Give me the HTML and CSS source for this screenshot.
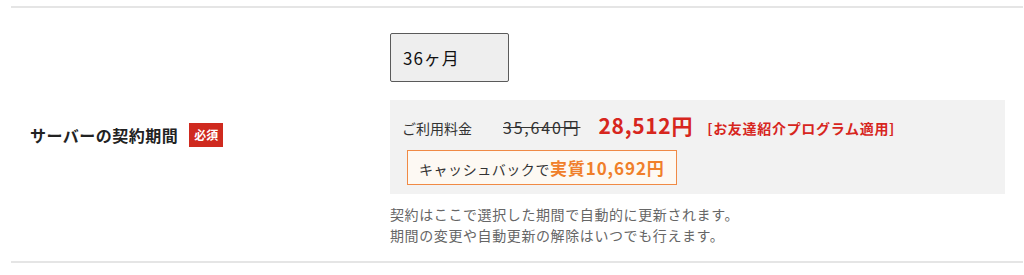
FILE: index.html
```html
<!DOCTYPE html>
<html lang="ja">
<head>
  <meta charset="UTF-8" />
  <meta name="viewport" content="width=device-width, initial-scale=1.0"/>
  <title>サーバーの契約期間</title>
  <link rel="stylesheet" href="styles.css">
</head>
<body>
  <div class="form-table">
    <div class="form-row">
      <div class="form-label">
        <span class="label-text">サーバーの契約期間</span>
        <span class="required">必須</span>
      </div>
      <div class="form-field">
        <div class="select-box">36ヶ月</div>
        <div class="price-box">
          <div class="price-line">
            <span class="price-title">ご利用料金</span>
            <span class="price-old">35,640円</span>
            <span class="price-new">28,512円</span>
            <span class="price-note">[お友達紹介プログラム適用]</span>
          </div>
          <div class="cashback">キャッシュバックで<span class="cashback-amount">実質10,692円</span></div>
        </div>
        <p class="notes">契約はここで選択した期間で自動的に更新されます。<br>期間の変更や自動更新の解除はいつでも行えます。</p>
      </div>
    </div>
  </div>
</body>
</html>
```

FILE: styles.css
```css
body {
  margin: 0;
  background: #ffffff;
  font-family: "Noto Sans CJK JP", "Noto Sans", sans-serif;
  color: #333;
}
.form-table {
  margin: 6px 1px 0 11px;
}
.form-row {
  display: flex;
  align-items: center;
  border-top: 2px solid #e5e5e5;
  border-bottom: 2px solid #e5e5e5;
}
.form-label {
  width: 360px;
  padding-left: 19px;
  display: flex;
  align-items: center;
  gap: 11px;
}
.label-text {
  font-size: 16px;
  font-weight: bold;
  letter-spacing: 0.5px;
  color: #222;
}
.required {
  background: #cf2a1f;
  color: #fff;
  font-size: 12px;
  font-weight: bold;
  padding: 0 5px;
  line-height: 24px;
}
.form-field {
  flex: 1;
  padding: 25px 18px 15px 0;
}
.select-box {
  width: 105px;
  height: 47px;
  line-height: 47px;
  padding-left: 12px;
  background: #eeeeee;
  border: 1px solid #5a5a5a;
  border-radius: 2px;
  font-size: 17px;
  letter-spacing: 1px;
  color: #111;
}
.price-box {
  margin-top: 18px;
  background: #f2f2f2;
  padding: 11px 12px 9px 12px;
}
.price-line {
  display: flex;
  align-items: baseline;
  height: 30px;
  line-height: 28px;
}
.price-title {
  font-size: 14px;
  width: 101px;
}
.price-old {
  font-size: 16px;
  letter-spacing: 1.8px;
  text-decoration: line-through;
  color: #333;
  margin-right: 18px;
}
.price-new {
  font-size: 21px;
  font-weight: bold;
  letter-spacing: 0.7px;
  color: #d7261e;
  margin-right: 14px;
}
.price-note {
  font-size: 14px;
  font-weight: bold;
  letter-spacing: 0.7px;
  color: #d7261e;
}
.cashback {
  display: inline-block;
  margin: 9px 0 0 5px;
  padding: 0 11px;
  height: 33px;
  line-height: 33px;
  background: #fdf9f3;
  border: 1px solid #f08a45;
  font-size: 14px;
  letter-spacing: 0.55px;
  color: #333;
}
.cashback-amount {
  font-size: 17px;
  font-weight: bold;
  letter-spacing: 0.9px;
  color: #f07f2a;
}
.notes {
  margin: 10px 0 0 0;
  font-size: 14px;
  line-height: 21px;
  letter-spacing: 0.6px;
  color: #666;
}
```
